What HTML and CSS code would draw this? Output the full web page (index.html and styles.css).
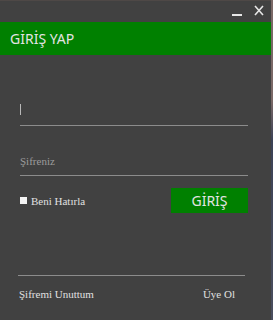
FILE: index.html
```html
<!DOCTYPE html>
<html lang="tr">
<head>
<meta charset="utf-8">
<link rel="stylesheet" href="styles.css">
</head>
<body>
<div class="window">
  <div class="titlebar">
    <svg class="ctl min" width="10" height="16" viewBox="0 0 10 16"><rect x="0" y="13" width="10" height="2" fill="#e6e6e6"/></svg>
    <svg class="ctl close" width="10" height="11" viewBox="0 0 10 11"><path d="M1 1 L9 10 M9 1 L1 10" stroke="#e6e6e6" stroke-width="1.6" fill="none"/></svg>
  </div>
  <div class="header">GİRİŞ YAP</div>
  <div class="form">
    <div class="field first"><span class="cursor"></span></div>
    <div class="field second"><span class="placeholder">Şifreniz</span></div>
    <div class="row">
      <label class="remember"><span class="box"></span>Beni Hatırla</label>
      <button class="btn">GİRİŞ</button>
    </div>
  </div>
  <div class="footer">
    <div class="links">
      <span>Şifremi Unuttum</span>
      <span>Üye Ol</span>
    </div>
  </div>
</div>
</body>
</html>
```
FILE: styles.css
```css
html, body {
  margin: 0;
  padding: 0;
}
body {
  width: 273px;
  height: 320px;
  overflow: hidden;
  background: linear-gradient(#7a6866 0, #7a6866 100px, #3c4256 140px, #4a4e5e 320px);
}
.window {
  width: 271px;
  height: 320px;
  background: #414141;
  border-top: 1px solid #4e4846;
  box-sizing: border-box;
}
.titlebar {
  height: 21px;
  display: flex;
  justify-content: flex-end;
  align-items: flex-start;
  gap: 12px;
  padding-right: 7px;
}
.ctl { display: block; }
.ctl.min { margin-top: 0; }
.ctl.close { margin-top: 4px; }
.header {
  height: 33px;
  background: #008000;
  color: #e4e4e4;
  font-family: "Noto Sans", sans-serif;
  font-size: 14px;
  line-height: 33px;
  padding-left: 10px;
}
.form {
  margin-left: 20px;
  width: 228px;
}
.field {
  border-bottom: 1px solid #8c8c8c;
  box-sizing: border-box;
}
.field.first {
  height: 71px;
  padding-top: 49px;
}
.cursor {
  display: block;
  width: 1px;
  height: 11px;
  background: #b8b8b8;
}
.field.second {
  height: 50px;
  padding-top: 28px;
}
.placeholder {
  display: block;
  font-family: "Liberation Serif", serif;
  font-size: 11px;
  line-height: 14px;
  color: #9c9c9c;
}
.row {
  margin-top: 12px;
  display: flex;
  justify-content: space-between;
  align-items: center;
}
.remember {
  display: flex;
  align-items: center;
  font-family: "Liberation Serif", serif;
  font-size: 11px;
  color: #e0e0e0;
}
.box {
  width: 7px;
  height: 7px;
  background: #f4f4f4;
  margin-right: 4px;
}
.btn {
  width: 77px;
  height: 25px;
  border: 0;
  padding: 0;
  background: #008000;
  color: #e4e4e4;
  font-family: "Noto Sans", sans-serif;
  font-size: 14px;
}
.footer {
  margin-top: 62px;
  margin-left: 18px;
  width: 227px;
  border-top: 1px solid #8c8c8c;
}
.links {
  margin-top: 11px;
  display: flex;
  justify-content: space-between;
  padding: 0 10px 0 1px;
  font-family: "Liberation Serif", serif;
  font-size: 11px;
  line-height: 14px;
  color: #e0e0e0;
}
```
